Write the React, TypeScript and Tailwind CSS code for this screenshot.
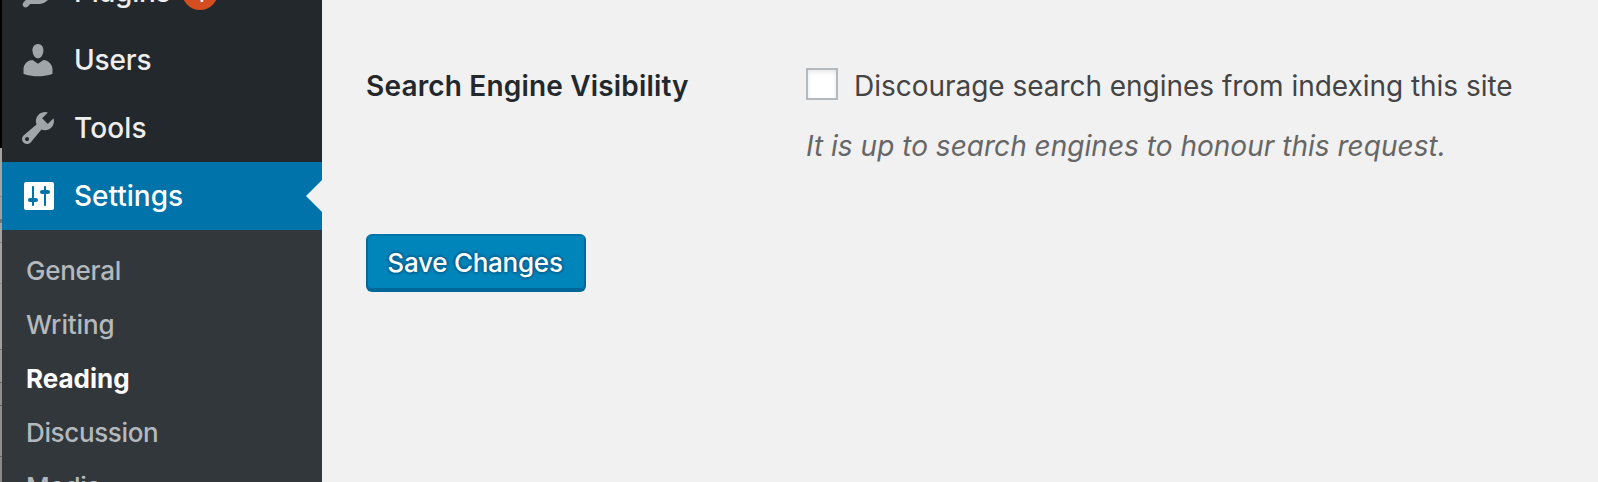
import type { ReactNode } from "react";

function Icon({ children, className = "text-[#a0a5aa]" }: { children: ReactNode; className?: string }) {
  return (
    <svg viewBox="0 0 20 20" className={`mx-4 size-10 shrink-0 fill-current ${className}`}>
      {children}
    </svg>
  );
}

function Item({ icon, label, spacing = "", children, active }: { icon: ReactNode; label: string; spacing?: string; children?: ReactNode; active?: boolean }) {
  return (
    <li className={`flex h-[68px] shrink-0 items-center ${active ? "bg-[#0073aa] text-white" : "text-[#eee]"}`}>
      {icon}
      <span className={`text-[28px] font-medium ${spacing}`}>{label}</span>
      {children}
    </li>
  );
}

export default function App() {
  return (
    <div className="flex h-[482px] w-[1598px] overflow-hidden bg-[#f1f1f1] font-[Inter,sans-serif]">
      <div className="flex w-[2px] shrink-0 flex-col">
        <div className="h-[148px] shrink-0 bg-black" />
        <div className="h-[49px] shrink-0 border-b border-[#858585] bg-[#a3a3a3]" />
        <div className="h-[26px] shrink-0 border-b-4 border-[#777] bg-[#9f9f9f]" />
        <div className="h-[20px] shrink-0 border-b border-[#858585] bg-[#a3a3a3]" />
        <div className="h-[41px] shrink-0 border-b border-[#858585] bg-[#a3a3a3]" />
        <div className="h-[66px] shrink-0 border-b border-[#777] bg-[#9f9f9f]" />
        <div className="h-[33px] shrink-0 border-b border-[#666] bg-[#999]" />
        <div className="h-[23px] shrink-0 border-b border-[#666] bg-[#8f8f8f]" />
        <div className="h-[51px] shrink-0 border-b border-[#666] bg-[#8f8f8f]" />
        <div className="grow bg-[#8a8a8a]" />
      </div>
      <aside className="flex w-[320px] shrink-0 flex-col overflow-hidden bg-[#23282d]">
        <ul className="-mt-[42px] flex flex-col">
          <Item
            label="Plugins"
            spacing="tracking-[-0.25px]"
            icon={
              <Icon>
                <path d="M13.11 4.36L9.87 7.6 8 5.73l3.24-3.24c.35-.34 1.05-.2 1.56.32.52.51.66 1.21.31 1.55zm-8 1.77l.91-1.12 9.01 9.01-1.19.84c-.71.71-2.63 1.16-3.82 1.16H6.14L4.9 17.26c-.59.59-1.54.59-2.12 0-.59-.58-.59-1.53 0-2.12l1.24-1.24v-3.88c0-1.13.4-3.19 1.09-3.89zm7.26 3.97l3.24-3.24c.34-.35 1.04-.21 1.55.31.52.51.66 1.21.31 1.55l-3.24 3.25z" />
              </Icon>
            }
          >
            <span className="ml-3 flex size-9 items-center justify-center rounded-full bg-[#d54e21] pt-2 text-lg font-semibold text-white">1</span>
          </Item>
          <Item
            label="Users"
            spacing="tracking-[-0.15px]"
            icon={
              <Icon>
                <path d="M10 9.25c-2.27 0-2.73-3.44-2.73-3.44C7 4.02 7.82 2 9.97 2c2.16 0 2.98 2.02 2.71 3.81 0 0-.41 3.44-2.68 3.44zm0 2.57L12.72 10c2.39 0 4.52 2.33 4.52 4.53v2.49s-3.65 1.13-7.24 1.13c-3.65 0-7.24-1.13-7.24-1.13v-2.49c0-2.25 1.94-4.48 4.47-4.48z" />
              </Icon>
            }
          />
          <Item
            label="Tools"
            spacing="tracking-[0.15px]"
            icon={
              <Icon>
                <path d="M16.68 9.77c-1.34 1.34-3.3 1.67-4.95.99l-5.41 6.52c-.99.99-2.59.99-3.58 0s-.99-2.59 0-3.57l6.52-5.42c-.68-1.65-.35-3.61.99-4.95 1.28-1.28 3.12-1.62 4.72-1.06l-2.89 2.89 2.82 2.82 2.86-2.87c.53 1.58.18 3.39-1.08 4.65zM3.81 16.21c.4.39 1.04.39 1.43 0 .4-.4.4-1.04 0-1.43-.39-.4-1.03-.4-1.43 0-.39.39-.39 1.03 0 1.43z" />
              </Icon>
            }
          />
          <Item
            active
            label="Settings"
            icon={
              <Icon className="text-white">
                <path d="M18 16V4c0-.55-.45-1-1-1H4c-.55 0-1 .45-1 1v12c0 .55.45 1 1 1h13c.55 0 1-.45 1-1zM8 11h1c.55 0 1 .45 1 1s-.45 1-1 1H8v1.5c0 .28-.22.5-.5.5s-.5-.22-.5-.5V13H6c-.55 0-1-.45-1-1s.45-1 1-1h1V5.5c0-.28.22-.5.5-.5s.5.22.5.5V11zm5-2h-1c-.55 0-1-.45-1-1s.45-1 1-1h1V5.5c0-.28.22-.5.5-.5s.5.22.5.5V7h1c.55 0 1 .45 1 1s-.45 1-1 1h-1v5.5c0 .28-.22.5-.5.5s-.5-.22-.5-.5V9z" />
              </Icon>
            }
          >
            <svg viewBox="0 0 16 32" className="ml-auto h-8 w-4 fill-[#f1f1f1]">
              <path d="M16 0v32L0 16z" />
            </svg>
          </Item>
        </ul>
        <ul className="flex h-[300px] shrink-0 flex-col bg-[#32373c] pt-[14px] pl-6 text-[26px] leading-[54px] font-medium text-[#b4b9be]">
          <li className="tracking-[-0.25px]">General</li>
          <li className="tracking-[-0.1px]">Writing</li>
          <li className="font-bold text-white">Reading</li>
          <li className="tracking-[-0.35px]">Discussion</li>
          <li className="tracking-[-0.3px]">Media</li>
        </ul>
      </aside>
      <main className="flex grow flex-col items-start pt-[66px] pl-11 text-[28px] whitespace-nowrap">
        <div className="flex">
          <h2 className="w-[440px] text-[28px] leading-10 font-semibold tracking-[0.17px] text-[#23282d]">Search Engine Visibility</h2>
          <div>
            <label className="flex h-10 items-start leading-10 tracking-[-0.03px] text-[#444]">
              <span className="mt-[2px] mr-4 size-8 border-2 border-[#b4b9be] bg-white shadow-[inset_0_2px_4px_rgba(0,0,0,0.1)]" />
              <span>Discourage search engines from indexing this site</span>
            </label>
            <p className="mt-5 leading-10 tracking-[0.02px] text-[#666] italic">It is up to search engines to honour this request.</p>
          </div>
        </div>
        <button className="mt-[68px] h-[58px] w-[220px] rounded-md border-2 border-[#006799] border-t-[#0073aa] bg-[#0085ba] pr-[2px] pb-[2px] text-[26px] font-medium tracking-[-0.25px] text-white shadow-[inset_0_-2px_0_#006799] [text-shadow:0_-2px_2px_#006799,2px_0_2px_#006799,0_2px_2px_#006799,-2px_0_2px_#006799]">
          Save Changes
        </button>
      </main>
    </div>
  );
}
